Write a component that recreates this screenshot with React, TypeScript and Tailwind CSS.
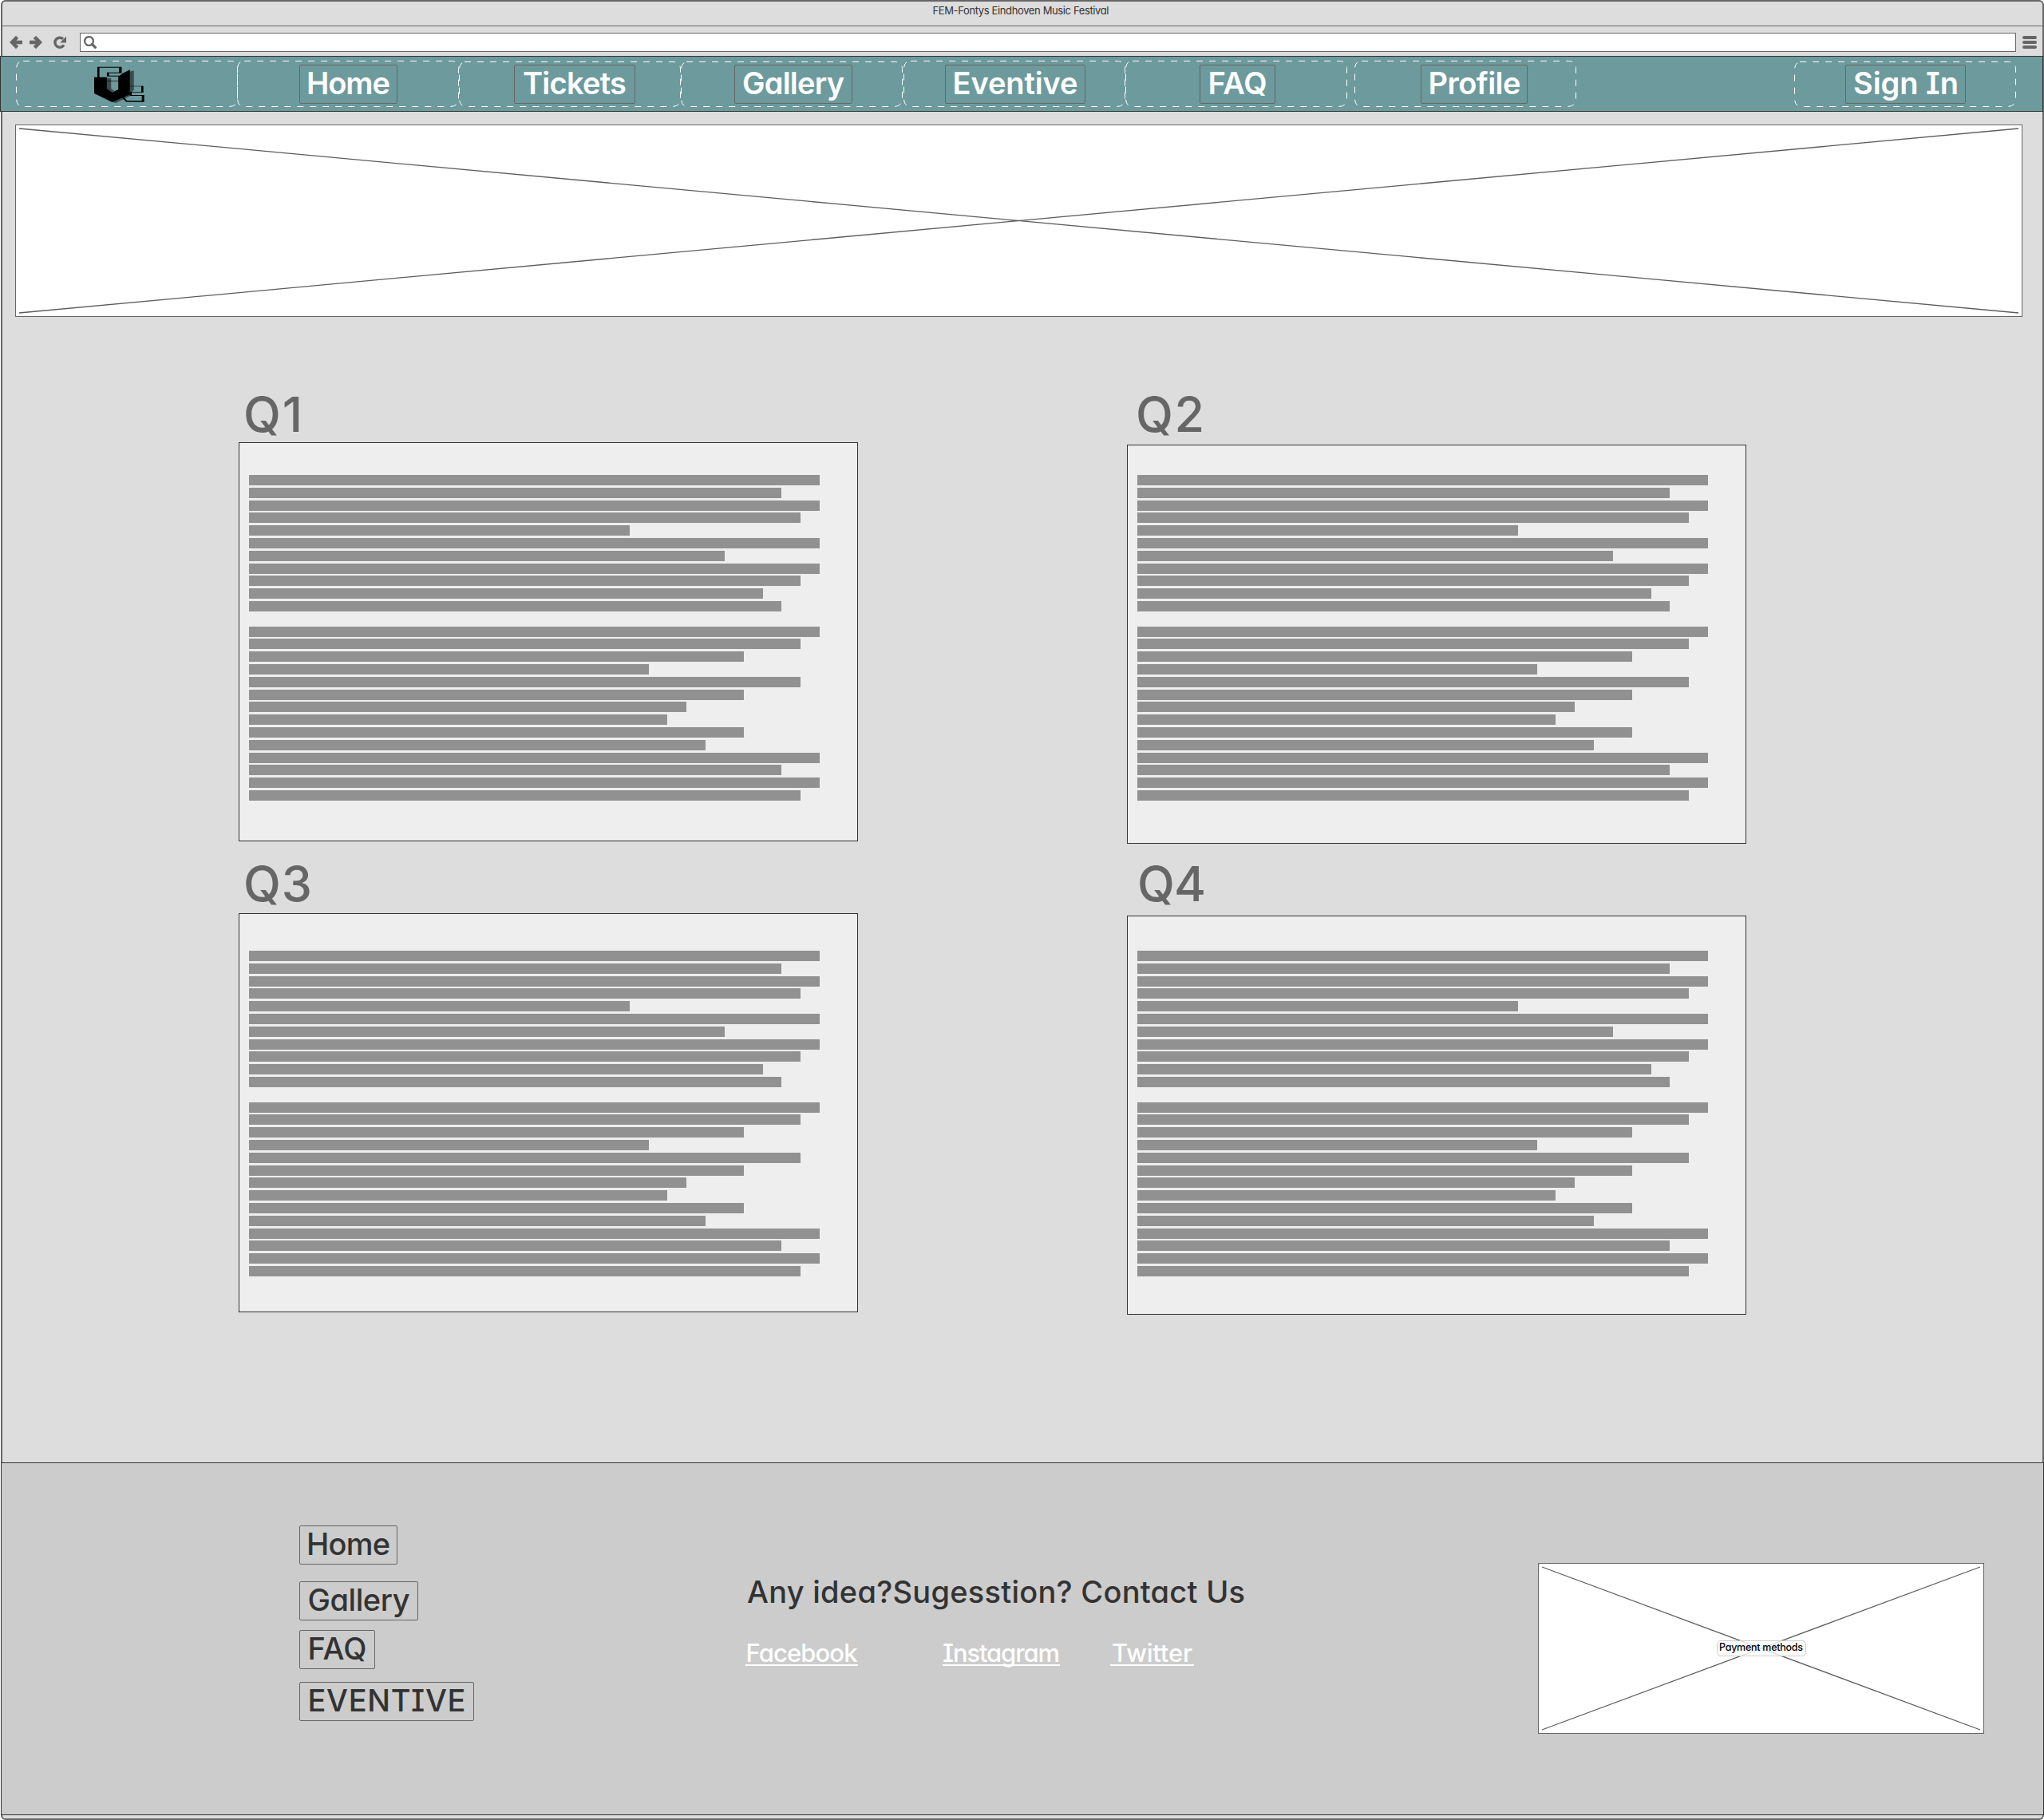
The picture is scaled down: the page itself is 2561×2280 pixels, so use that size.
import { useLayoutEffect, useRef, useState } from "react";

/* Text whose letter spacing is adjusted so that it spans `width` pixels. */
function FitText({ text, width, className = "" }: { text: string; width: number; className?: string }) {
  const ref = useRef<HTMLSpanElement>(null);
  const [spacing, setSpacing] = useState(0);
  useLayoutEffect(() => {
    if (ref.current) {
      const natural = ref.current.getBoundingClientRect().width;
      setSpacing((width - natural) / (text.length - 1));
    }
  }, [text, width]);
  return (
    <span
      ref={ref}
      className={"inline-block whitespace-nowrap " + className}
      style={{ letterSpacing: spacing, marginRight: -spacing }}
    >
      {text}
    </span>
  );
}

function Logo() {
  return (
    <svg className="h-[46px] w-[63px]" viewBox="84 40 190 138" preserveAspectRatio="none">
      <g fill="#3a4c4e">
        <path d="M132 84H148V134L132 124Z" />
        <path d="M218 60L234 56V130L218 142Z" />
        <path d="M152 174L166 178L222 150L218 140Z" />
        <path d="M132 124L152 138L160 132L148 124Z" />
      </g>
      <path d="M84 81H132V124L152 138L175 127V80L190 68L219 53V146L152 175L84 142Z" />
      <path d="M96 42H188V66H178V45H104V82H96Z" />
      <path d="M132 63H180V66H140V75H184V78H132Z" />
      <path d="M132 94H174V96H132Z" />
      <path d="M218 114H270V138H262V116H218Z" />
      <path d="M218 136H270V138H226V148H273V174H205L190 159L196 155L208 170H264V151H218Z" />
    </svg>
  );
}

function LinkBox({ label, text, className }: { label: string; text: number; className: string }) {
  return (
    <a
      className={
        "flex h-[49px] items-center justify-center rounded-[2px] border border-[#666] pb-[3px] text-[38px] leading-none " +
        className
      }
    >
      <FitText text={label} width={text} />
    </a>
  );
}

const tabs = [
  { label: "Home", text: 105, slot: "-ml-px", link: "ml-[78px] w-[123px]", top: 6.5 },
  { label: "Tickets", text: 130, slot: "", link: "ml-[69px] w-[152px]", top: 7.5 },
  { label: "Gallery", text: 128, slot: "", link: "ml-[67px] w-[148px]", top: 7.5 },
  { label: "Eventive", text: 157, slot: "ml-px", link: "ml-[52px] w-[176px]", top: 6.5 },
  { label: "FAQ", text: 74, slot: "", link: "ml-[93px] w-[95px]", top: 6.5 },
  { label: "Profile", text: 116, slot: "ml-[9px]", link: "ml-[83px] w-[134px] pl-px", top: 6.5 },
  { label: "Sign In", text: 132, slot: "ml-[273px]", link: "ml-[64px] w-[151px] pl-px", top: 7.5 },
];

function DashedFrame({ top }: { top: number }) {
  const y = top - 1;
  return (
    <svg className="absolute top-0 left-0 h-[68px] w-[278px]" fill="none" stroke="#fff">
      <path
        strokeDasharray="8 8"
        d={`M4 ${y + 1}Q0.5 ${y + 4} 0.5 ${y + 10}V52Q0.5 62.5 9 62.5H267Q277.5 62.5 277.5 52V${y + 9}Q277.5 ${y} 268 ${y}H4`}
      />
    </svg>
  );
}

function NavBar() {
  return (
    <nav className="-ml-[3px] flex h-[70px] w-[2560px] shrink-0 border border-[#333] bg-[#6d9a9d] pl-[19px] font-[560] text-white">
      <div className="relative w-[278px] shrink-0 pt-[12px] pl-[98px]">
        <DashedFrame top={6.5} />
        <Logo />
      </div>
      {tabs.map((t) => (
        <div key={t.label} className={"relative w-[278px] shrink-0 pt-[10px] " + t.slot}>
          <DashedFrame top={t.top} />
          <LinkBox label={t.label} text={t.text} className={t.link} />
        </div>
      ))}
    </nav>
  );
}

function BrowserChrome() {
  return (
    <>
      <div className="flex h-[31px] shrink-0 justify-center border-b border-[#666] pr-[4px] text-[13px] leading-[23px] text-[#333]">
        <FitText text="FEM-Fontys Eindhoven Music Festival" width={221} />
      </div>
      <div className="flex h-[37px] shrink-0 pt-[8px] text-[#666]">
        <svg className="mt-[4px] ml-[9px] h-4 w-4" viewBox="0 0 16 16" fill="none" stroke="currentColor" strokeWidth="4.6">
          <path d="M9.6 1.4L3.2 8L9.6 14.6" />
          <path d="M3 8H16" />
        </svg>
        <svg className="mt-[4px] ml-[9px] h-4 w-4" viewBox="0 0 16 16" fill="none" stroke="currentColor" strokeWidth="4.6">
          <path d="M6.4 1.4L12.8 8L6.4 14.6" />
          <path d="M0 8H13" />
        </svg>
        <svg className="mt-[4px] ml-[14px] h-4 w-4" viewBox="0 0 16 16">
          <path d="M13 11.4A6 6 0 1 1 12 3.8" fill="none" stroke="currentColor" strokeWidth="3.4" />
          <path d="M16 0.6V8.4H8.2Z" fill="currentColor" />
        </svg>
        <div className="ml-[17px] h-6 w-[2426px] border border-[#666] bg-white pt-[3px] pl-[4px]">
          <svg className="h-4 w-4" viewBox="0 0 16 16" fill="none" stroke="currentColor">
            <circle cx="6.5" cy="6.5" r="5.4" strokeWidth="2.3" />
            <path d="M10.5 10.5L14.4 14.4" strokeWidth="3.2" strokeLinecap="round" />
          </svg>
        </div>
        <div className="mt-[4px] ml-[8px] flex w-[18px] flex-col gap-[2px]">
          <span className="h-[4px] rounded-full bg-[#666]" />
          <span className="h-[4px] rounded-full bg-[#666]" />
          <span className="h-[4px] rounded-full bg-[#666]" />
        </div>
      </div>
    </>
  );
}

/* Line lengths in thirtieths of the full width; 0 is a paragraph break. */
const lines = [30, 28, 30, 29, 20, 30, 25, 30, 29, 27, 28, 0, 30, 29, 26, 21, 29, 26, 23, 22, 26, 24, 30, 28, 30, 29];

function Question({ title, text, heading, panel }: { title: string; text: number; heading: string; panel: string }) {
  return (
    <section>
      <h2 className={"text-[61px] font-medium text-[#666] " + heading}>
        <FitText text={title} width={text} />
      </h2>
      <div className={"h-[500px] w-[776px] border border-[#333] bg-[#eee] pl-[12px] " + panel}>
        {lines.map((n, i) => (
          <div key={i} className="h-[15.8px] w-[715px]">
            <div className="h-[13px] bg-[#919191]" style={{ width: `${(n / 30) * 100}%` }} />
          </div>
        ))}
      </div>
    </section>
  );
}

function Footer() {
  return (
    <footer className="-ml-[2px] flex h-[442px] w-[2560px] shrink-0 border border-[#333] bg-[#ccc] font-medium text-[#333]">
      <div className="ml-[373px] w-[220px] pt-[78px]">
        <LinkBox label="Home" text={105} className="w-[123px]" />
        <LinkBox label="Gallery" text={128} className="mt-[21px] w-[149px]" />
        <LinkBox label="FAQ" text={74} className="mt-[12px] w-[95px]" />
        <LinkBox label="EVENTIVE" text={198} className="mt-[16px] w-[219px]" />
      </div>
      <div className="ml-[339px] w-[640px] pt-[138px]">
        <p className="pl-[2px] text-[38px] leading-[46px]">
          <FitText text="Any idea?Sugesstion? Contact Us" width={624} />
        </p>
        <div className="mt-[33px] flex text-[31px] leading-[35px] text-white">
          <a className="flex h-[37px] w-[141px] justify-center border-b-2 border-white pt-[3px]">
            <FitText text="Facebook" width={140} />
          </a>
          <a className="ml-[106px] flex h-[37px] w-[147px] justify-center border-b-2 border-white pt-[3px]">
            <FitText text="Instagram" width={147} />
          </a>
          <a className="ml-[63px] flex h-[37px] w-[105px] justify-center border-b-2 border-white pt-[3px]">
            <FitText text="Twitter" width={101} />
          </a>
        </div>
      </div>
      <div className="relative mt-[125px] ml-[353px] flex h-[214px] w-[559px] items-center justify-center border border-[#666] bg-white">
        <svg className="absolute inset-0 h-full w-full" viewBox="0 0 557 212" stroke="#5c5c5c" strokeWidth="1.3">
          <path d="M4 4L553 208M553 4L4 208" />
        </svg>
        <span className="relative flex h-[20px] w-[112px] items-center justify-center rounded-[5px] border border-[#ccc] bg-white/80 pb-px text-[12.5px] leading-none font-medium text-black">
          <FitText text="Payment methods" width={105} />
        </span>
      </div>
    </footer>
  );
}

export default function App() {
  return (
    <div className="h-[2280px] w-[2561px] overflow-hidden bg-white pl-px font-['Inter','Liberation_Sans',sans-serif] [font-feature-settings:'cv11','cv08']">
      <div className="flex h-[2280px] w-[2560px] flex-col rounded-[6px] border-2 border-[#666] bg-[#ddd]">
        <BrowserChrome />
        <NavBar />
        <main className="h-[1692px] shrink-0 pt-[16px]">
          <div className="ml-[16px] h-[241px] w-[2515px] border border-[#666] bg-white">
            <svg className="h-full w-full" viewBox="0 0 2513 239" stroke="#5c5c5c" strokeWidth="1.3">
              <path d="M4 4L2509 235M2509 4L4 235" />
            </svg>
          </div>
          <div className="mt-[83px] ml-[296px] flex gap-[337px]">
            <div>
              <Question title="Q1" text={74} heading="h-[74px] pl-[6px] leading-[78px]" panel="pt-[40px]" />
              <Question title="Q3" text={86} heading="h-[90px] pl-[6px] leading-[107px]" panel="pt-[46px]" />
            </div>
            <div>
              <Question title="Q2" text={86} heading="h-[77px] pl-[11px] leading-[78px]" panel="pt-[37px]" />
              <Question title="Q4" text={86} heading="h-[90px] pl-[13px] leading-[101px]" panel="pt-[43px]" />
            </div>
          </div>
        </main>
        <Footer />
      </div>
    </div>
  );
}
